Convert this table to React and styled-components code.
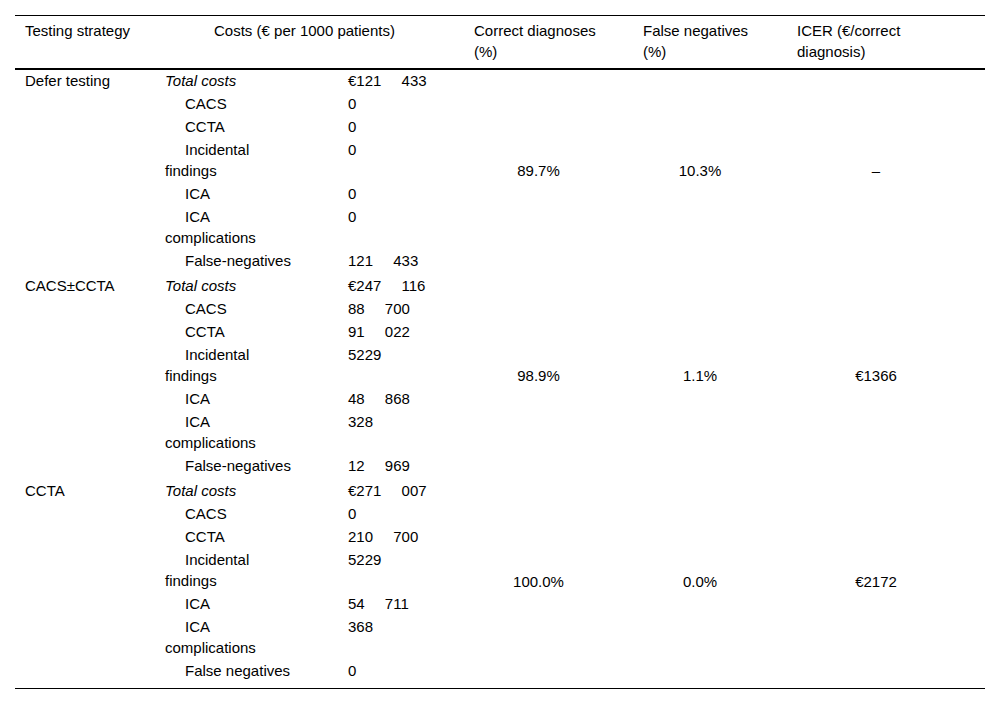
import React from 'react';
import styled, { createGlobalStyle } from 'styled-components';

const GlobalStyle = createGlobalStyle`
  body {
    margin: 0;
    background: #fff;
    color: #000;
    font-family: "Liberation Sans", Arial, sans-serif;
  }
`;

const Wrapper = styled.div`
  padding: 15px;
`;

const Table = styled.table`
  width: 970px;
  border-collapse: collapse;
  table-layout: fixed;
  font-family: "Liberation Sans", Arial, sans-serif;
  font-size: 15px;
  line-height: 21px;
  border-bottom: 1px solid #000;
`;

const HeadCell = styled.th`
  font-weight: normal;
  text-align: ${({ $center }) => ($center ? 'center' : 'left')};
  vertical-align: top;
  padding: 4px ${({ $wide }) => ($wide ? '30px' : '20px')} 6px 10px;
  border-top: 1px solid #000;
  border-bottom: 2px solid #000;
`;

const Row = styled.tr`
  td {
    padding-top: ${({ $top }) => $top}px;
    padding-bottom: ${({ $bottom }) => $bottom}px;
  }
`;

const StrategyCell = styled.td`
  vertical-align: top;
  padding-left: 10px;
  padding-right: 20px;
`;

const LabelCell = styled.td`
  vertical-align: top;
  padding-left: 10px;
  padding-right: 40px;
  text-indent: ${({ $sub }) => ($sub ? '20px' : '0')};
  font-style: ${({ $sub }) => ($sub ? 'normal' : 'italic')};
`;

const ValueCell = styled.td`
  vertical-align: top;
  padding-left: 12px;
  padding-right: 8px;
  word-spacing: 16px;
  white-space: nowrap;
`;

const MetricCell = styled.td`
  vertical-align: middle;
  text-align: center;
  padding-left: 10px;
  padding-right: 30px;

  && {
    padding-top: 0;
    padding-bottom: 5px;
  }
`;

const groups = [
  {
    strategy: 'Defer testing',
    correct: '89.7%',
    falseNeg: '10.3%',
    icer: '–',
    items: [
      ['Total costs', '€121 433'],
      ['CACS', '0'],
      ['CCTA', '0'],
      ['Incidental findings', '0'],
      ['ICA', '0'],
      ['ICA complications', '0'],
      ['False-negatives', '121 433'],
    ],
  },
  {
    strategy: 'CACS±CCTA',
    correct: '98.9%',
    falseNeg: '1.1%',
    icer: '€1366',
    items: [
      ['Total costs', '€247 116'],
      ['CACS', '88 700'],
      ['CCTA', '91 022'],
      ['Incidental findings', '5229'],
      ['ICA', '48 868'],
      ['ICA complications', '328'],
      ['False-negatives', '12 969'],
    ],
  },
  {
    strategy: 'CCTA',
    correct: '100.0%',
    falseNeg: '0.0%',
    icer: '€2172',
    items: [
      ['Total costs', '€271 007'],
      ['CACS', '0'],
      ['CCTA', '210 700'],
      ['Incidental findings', '5229'],
      ['ICA', '54 711'],
      ['ICA complications', '368'],
      ['False negatives', '0'],
    ],
  },
];

const widths = [140, 181, 128, 169, 154, 198];

const App = () => (
  <Wrapper>
    <GlobalStyle />
    <Table>
      <colgroup>
        {widths.map((w, i) => (
          <col key={i} width={w} />
        ))}
      </colgroup>
      <thead>
        <tr>
          <HeadCell>Testing strategy</HeadCell>
          <HeadCell colSpan={2} $center>
            Costs (€ per 1000 patients)
          </HeadCell>
          <HeadCell $wide>Correct diagnoses (%)</HeadCell>
          <HeadCell $wide>False negatives (%)</HeadCell>
          <HeadCell $wide>ICER (€/correct diagnosis)</HeadCell>
        </tr>
      </thead>
      <tbody>
        {groups.map((g, gi) =>
          g.items.map(([label, value], i) => {
            const last = i === g.items.length - 1;
            const span = g.items.length;
            let bottom = 1;
            if (last) bottom = gi === groups.length - 1 ? 7 : 4;
            return (
              <Row key={`${gi}-${i}`} $top={i === 0 ? 0 : 1} $bottom={bottom}>
                {i === 0 && <StrategyCell rowSpan={span}>{g.strategy}</StrategyCell>}
                <LabelCell $sub={i > 0}>{label}</LabelCell>
                <ValueCell>{value}</ValueCell>
                {i === 0 && (
                  <>
                    <MetricCell rowSpan={span}>{g.correct}</MetricCell>
                    <MetricCell rowSpan={span}>{g.falseNeg}</MetricCell>
                    <MetricCell rowSpan={span}>{g.icer}</MetricCell>
                  </>
                )}
              </Row>
            );
          })
        )}
      </tbody>
    </Table>
  </Wrapper>
);

export default App;
